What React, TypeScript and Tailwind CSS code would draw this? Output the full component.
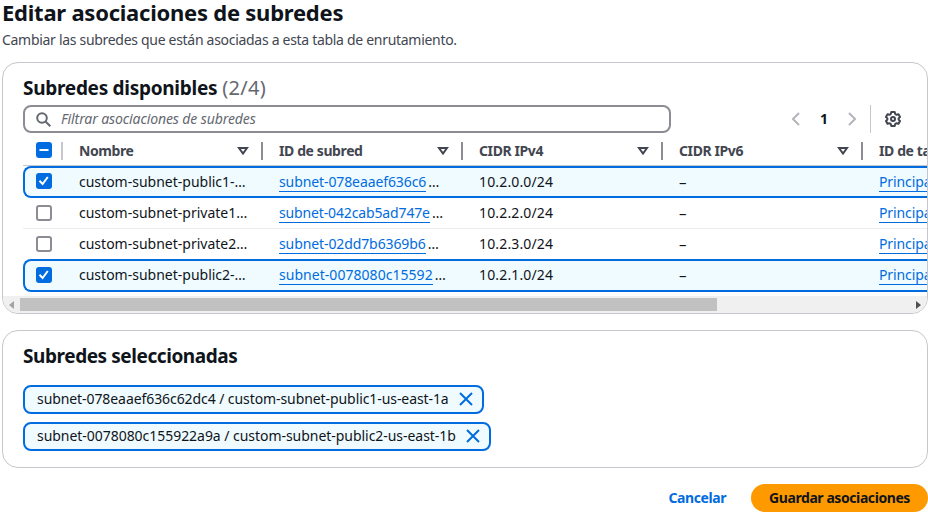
import { ReactNode } from "react";

type Subnet = {
  name: string;
  id: string;
  cidr: string;
  selected: boolean;
  rowClass: string;
  checkClass: string;
  idClass: string;
};

const subnets: Subnet[] = [
  {
    name: "custom-subnet-public1-…",
    id: "subnet-078eaaef636c6",
    cidr: "10.2.0.0/24",
    selected: true,
    rowClass: "h-8 rounded-l-lg border-2 border-r-0 border-[#006ce0] bg-[#f0fbff]",
    checkClass: "pb-0.5",
    idClass: "tracking-[-0.1px]",
  },
  {
    name: "custom-subnet-private1…",
    id: "subnet-042cab5ad747e",
    cidr: "10.2.2.0/24",
    selected: false,
    rowClass: "h-[31px] border-b border-[#ebebf0] pl-0.5",
    checkClass: "",
    idClass: "tracking-[-0.14px]",
  },
  {
    name: "custom-subnet-private2…",
    id: "subnet-02dd7b6369b6",
    cidr: "10.2.3.0/24",
    selected: false,
    rowClass: "h-[30px] pl-0.5",
    checkClass: "",
    idClass: "tracking-[-0.1px]",
  },
  {
    name: "custom-subnet-public2-…",
    id: "subnet-0078080c15592",
    cidr: "10.2.1.0/24",
    selected: true,
    rowClass: "h-[33px] rounded-l-lg border-2 border-r-0 border-[#006ce0] bg-[#f0fbff] pb-px",
    checkClass: "",
    idClass: "tracking-[0.04px]",
  },
];

function Checkbox({ state }: { state: "on" | "off" | "mixed" }) {
  if (state === "off") {
    return <span className="block size-4 rounded-[3px] border-2 border-[#8c8c94] bg-white" />;
  }
  return (
    <span className="block size-4 rounded-[3px] bg-[#006ce0]">
      <svg viewBox="0 0 16 16" className="size-4" fill="none" stroke="#fff" strokeWidth="2">
        {state === "on" ? <path d="M3.5 7.8 6.6 11l5.2-7" /> : <path d="M3.5 8h9" />}
      </svg>
    </span>
  );
}

function HeaderCell({ children, first }: { children: ReactNode; first?: boolean }) {
  return (
    <div className="flex w-[200px] shrink-0 items-center">
      <span className={first ? "h-[18px] w-0.5 bg-[#c6c6cd]" : "h-[18px] w-0.5 bg-[#8c8c94]"} />
      <span className="ml-4 flex-1 font-bold tracking-[-0.4px] whitespace-nowrap text-[#424650]">{children}</span>
      <svg viewBox="0 0 12 10" className="mr-3 h-2.5 w-3" fill="none" stroke="#424650" strokeWidth="2">
        <path d="M2 2h8L6 7.6z" />
      </svg>
    </div>
  );
}

function Row({ subnet }: { subnet: Subnet }) {
  return (
    <div className={"flex w-[905px] shrink-0 items-center overflow-hidden " + subnet.rowClass}>
      <div className={"w-[54px] shrink-0 pl-[11px] " + subnet.checkClass}>
        <Checkbox state={subnet.selected ? "on" : "off"} />
      </div>
      <div className="w-[200px] shrink-0 whitespace-nowrap">{subnet.name}</div>
      <div className="flex w-[200px] shrink-0 whitespace-nowrap">
        <span className={"h-5 border-b border-[#006ce0] leading-5 text-[#006ce0] " + subnet.idClass}>{subnet.id}</span>
        <span className="pl-0.5 leading-5">…</span>
      </div>
      <div className="w-[200px] shrink-0 tracking-[0.15px]">{subnet.cidr}</div>
      <div className="w-[200px] shrink-0 text-[15px] leading-5">–</div>
      <span className="h-5 shrink-0 border-b border-[#006ce0] leading-5 tracking-[-0.1px] text-[#006ce0]">Principal</span>
    </div>
  );
}

function Token({ children, className }: { children: ReactNode; className: string }) {
  return (
    <div
      className={
        "flex h-[29px] items-center justify-between rounded-lg border-2 border-[#006ce0] bg-[#f0fbff] pr-[9px] pb-px pl-3 whitespace-nowrap " +
        className
      }
    >
      <span>{children}</span>
      <svg viewBox="0 0 14 14" className="size-3.5" fill="none" stroke="#006ce0" strokeWidth="2">
        <path d="m1 1 12 12M13 1 1 13" />
      </svg>
    </div>
  );
}

export default function App() {
  return (
    <div className="h-[518px] w-[928px] overflow-hidden bg-white pl-0.5 font-['Noto_Sans','Open_Sans',sans-serif] text-sm leading-5 text-[#0f141a]">
      <h1 className="h-[30px] text-[22px] leading-[25px] font-bold tracking-[-0.24px] whitespace-nowrap">
        Editar asociaciones de subredes
      </h1>
      <p className="h-8 tracking-[-0.3px] whitespace-nowrap text-[#424650]">
        <span>Cambiar las subredes que están asociadas a esta tabla de enrutamiento.</span>
      </p>

      <section className="flex h-[252px] w-[926px] flex-col overflow-hidden rounded-2xl border border-[#c6c6cd]">
        <h2 className="flex h-[42px] gap-[5px] pt-[13px] pl-5 text-[19px] leading-6 font-bold whitespace-nowrap">
          <span className="tracking-[-0.28px]">Subredes disponibles</span>
          <span className="text-xl leading-6 font-normal tracking-[0.3px] text-[#656871]">(2/4)</span>
        </h2>
        <div className="flex h-7 items-center pl-5">
          <div className="flex h-7 w-[648px] items-center rounded-lg border-2 border-[#8c8c94] pl-[11px]">
            <svg viewBox="0 0 15 15" className="size-[15px]" fill="none" stroke="#656871" strokeWidth="2">
              <circle cx="6" cy="6" r="4.8" />
              <path d="m9.5 9.5 4.8 4.8" />
            </svg>
            <span className="ml-2.5 tracking-[-0.1px] text-[#656871] italic">Filtrar asociaciones de subredes</span>
          </div>
          <svg viewBox="0 0 8 14" className="ml-[121px] h-3.5 w-2" fill="none" stroke="#b4b4bb" strokeWidth="2">
            <path d="M7 1 1 7l6 6" />
          </svg>
          <span className="w-12 text-center font-bold">1</span>
          <svg viewBox="0 0 8 14" className="h-3.5 w-2" fill="none" stroke="#b4b4bb" strokeWidth="2">
            <path d="m1 1 6 6-6 6" />
          </svg>
          <span className="ml-3.5 h-7 w-px bg-[#c6c6cd]" />
          <svg viewBox="0 0 16 16" className="ml-3.5 size-4" fill="none" stroke="#424650" strokeWidth="2" strokeLinejoin="round">
            <path d="M6.3 1h3.4l.5 2 1.3.8 2-.6L15 6l-1.4 1.4v1.2L15 10l-1.5 2.8-2-.6-1.3.8-.5 2H6.3l-.5-2-1.3-.8-2 .6L1 10l1.4-1.4V7.4L1 6l1.5-2.8 2 .6L5.8 3z" />
            <circle cx="8" cy="8" r="2" />
          </svg>
        </div>

        <div className="ml-5 flex h-[33px] w-[905px] shrink-0 items-center overflow-hidden border-b border-[#c6c6cd] pt-[3px]">
          <div className="w-[38px] shrink-0 pb-px pl-[13px]">
            <Checkbox state="mixed" />
          </div>
          <HeaderCell first>Nombre</HeaderCell>
          <HeaderCell>ID de subred</HeaderCell>
          <HeaderCell>CIDR IPv4</HeaderCell>
          <HeaderCell>CIDR IPv6</HeaderCell>
          <HeaderCell>ID de tabla</HeaderCell>
        </div>
        <div className="flex flex-col pl-5">
          {subnets.map((subnet) => (
            <Row key={subnet.id} subnet={subnet} />
          ))}
        </div>

        <div className="mt-auto flex h-[17px] shrink-0 items-center bg-[#f0f0f0] pl-1.5">
          <span className="border-y-4 border-r-[5px] border-y-transparent border-r-[#a3a3a3]" />
          <span className="ml-1.5 h-[13px] w-[697px] bg-[#c1c1c1]" />
          <span className="mr-1.5 ml-auto border-y-4 border-l-[5px] border-y-transparent border-l-[#505050]" />
        </div>
      </section>

      <section className="mt-4 h-[138px] w-[926px] rounded-2xl border border-[#c6c6cd] pt-[13px] pl-5">
        <h2 className="h-[41px] text-[19px] leading-6 font-bold tracking-[-0.43px]">
          <span>Subredes seleccionadas</span>
        </h2>
        <div className="flex flex-col gap-2">
          <Token className="w-[461px] tracking-[-0.08px]">subnet-078eaaef636c62dc4 / custom-subnet-public1-us-east-1a</Token>
          <Token className="w-[468px] tracking-[-0.04px]">subnet-0078080c155922a9a / custom-subnet-public2-us-east-1b</Token>
        </div>
      </section>

      <footer className="mt-4 flex h-7 w-[926px] items-center justify-end font-bold tracking-[-0.42px]">
        <button className="mr-[25px] text-[#006ce0]">Cancelar</button>
        <button className="h-7 w-[177px] rounded-full bg-[#ff9900] whitespace-nowrap">Guardar asociaciones</button>
      </footer>
    </div>
  );
}
